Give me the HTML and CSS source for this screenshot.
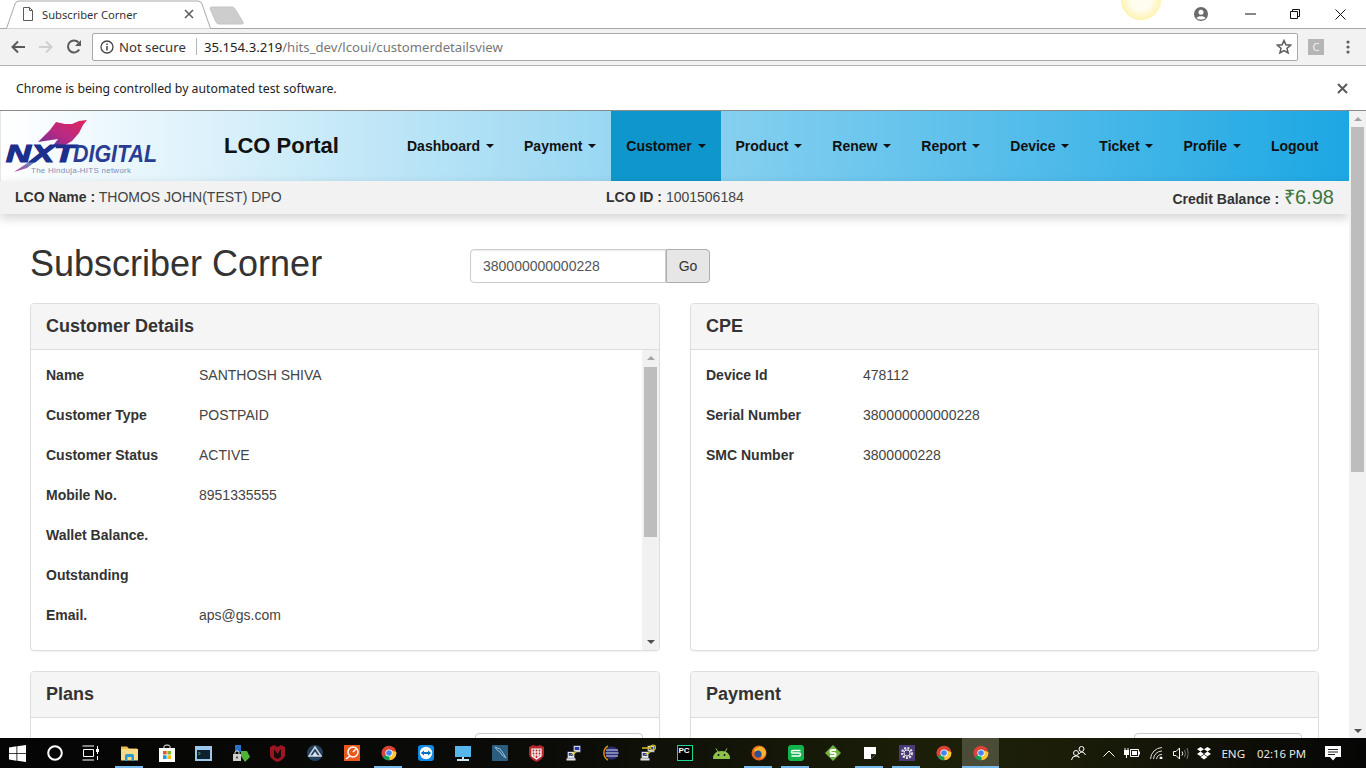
FILE: index.html
```html
<!DOCTYPE html>
<html lang="en">
<head>
<meta charset="utf-8">
<title>Subscriber Corner</title>
<link rel="stylesheet" href="styles.css">
</head>
<body>
<svg class="defs" width="0" height="0" aria-hidden="true">
  <symbol id="chrome" viewBox="0 0 24 24">
    <circle cx="12" cy="12" r="11" fill="#da4436"/>
    <path d="M12 12 2.500 17.500A11 11 0 0 1 3 5.600Z" fill="#da4436"/>
    <path d="M12 12 2.500 17.500A11 11 0 0 0 13 23Z" fill="#0f9d58"/>
    <path d="M12 12 13 23A11 11 0 0 0 22.900 10.500L12 7Z" fill="#fcc934"/>
    <circle cx="12" cy="12" r="5.400" fill="#fff"/>
    <circle cx="12" cy="12" r="4.200" fill="#4285f4"/>
  </symbol>
  <symbol id="putty" viewBox="0 0 24 24">
    <rect x="11" y="2" width="10" height="9" fill="#d5d9e4" stroke="#223" stroke-width="1"/>
    <rect x="13" y="4" width="6" height="4" fill="#2436a8"/>
    <rect x="3" y="10" width="10" height="9" fill="#e6e8ee" stroke="#223" stroke-width="1"/>
    <rect x="5" y="12" width="6" height="4" fill="#2436a8"/>
    <rect x="2" y="19" width="12" height="3" fill="#dfe1e6"/>
    <path d="M4 17 14 9l-2 3 6-3-9 7 2-3Z" fill="#f2e21c"/>
  </symbol>
</svg>

<div class="tabstrip">
  <svg class="tabshape" width="250" height="29" viewBox="0 0 250 29" aria-hidden="true">
    <path d="M6.500 28.500 15 4Q16 1 19 1H198Q201 1 202 4L210.500 28.500" fill="#fff" stroke="#a8a8a8"/>
    <path d="M210 8.500Q210 7 212 7H232Q234 7 235 9L243 22Q244 24 242 24H219Q217 24 216 22Z" fill="#cdcdcd" stroke="#c4c4c4"/>
  </svg>
  <div class="tab">
    <svg class="tab-doc" width="12" height="14" viewBox="0 0 12 14" aria-hidden="true"><path d="M1.500.5H7.500L10.500 3.500V13.500H1.500ZM7.500.5V3.500H10.500" fill="#fff" stroke="#5a5a5a"/></svg>
    <span class="tab-title">Subscriber Corner</span>
    <svg class="tab-close" width="10" height="10" viewBox="0 0 10 10" aria-hidden="true"><path d="M1 1 9 9M9 1 1 9" stroke="#5f5f5f" stroke-width="1.600"/></svg>
  </div>
  <div class="sun"></div>
  <div class="winctl">
    <svg class="profile" width="14" height="14" viewBox="0 0 14 14" aria-hidden="true"><circle cx="7" cy="7" r="7" fill="#6a6a6a"/><circle cx="7" cy="5.200" r="2.500" fill="#fff"/><path d="M2.500 11C3.500 8.500 10.500 8.500 11.500 11 9 13 5 13 2.500 11Z" fill="#fff"/></svg>
    <svg class="minimize" width="11" height="2" viewBox="0 0 11 2" aria-hidden="true"><path d="M0 1H11" stroke="#111"/></svg>
    <svg class="restore" width="10" height="10" viewBox="0 0 10 10" aria-hidden="true"><path d="M.5 2.500H7.500V9.500H.5ZM2.500 2.500V.5H9.500V7.500H7.500" fill="none" stroke="#111"/></svg>
    <svg class="winclose" width="11" height="11" viewBox="0 0 11 11" aria-hidden="true"><path d="M.5.5 10.500 10.500M10.500.5.5 10.500" stroke="#111"/></svg>
  </div>
</div>

<div class="toolbar">
  <svg class="nav-ico" width="16" height="14" viewBox="0 0 16 14" aria-hidden="true"><path d="M15 7H3M8 1.500 2.500 7 8 12.500" fill="none" stroke="#5a5a5a" stroke-width="2"/></svg>
  <svg class="nav-ico" width="16" height="14" viewBox="0 0 16 14" aria-hidden="true"><path d="M1 7H13M8 1.500 13.500 7 8 12.500" fill="none" stroke="#cfcfcf" stroke-width="2"/></svg>
  <svg class="nav-ico" width="16" height="16" viewBox="0 0 16 16" aria-hidden="true"><path d="M13.200 10.500A6 6 0 1 1 12.500 3.500" fill="none" stroke="#5a5a5a" stroke-width="2"/><path d="M15 1V7H9Z" fill="#5a5a5a"/></svg>
  <div class="omnibox">
    <svg class="info-ico" width="14" height="14" viewBox="0 0 14 14" aria-hidden="true"><circle cx="7" cy="7" r="6" fill="none" stroke="#444" stroke-width="1.300"/><path d="M7 6V10.500M7 3.500V5" stroke="#444" stroke-width="1.500"/></svg>
    <span class="secure">Not secure</span>
    <span class="omni-sep"></span>
    <span class="url"><span class="host">35.154.3.219</span>/hits_dev/lcoui/customerdetailsview</span>
    <svg class="star" width="16" height="15" viewBox="0 0 16 15" aria-hidden="true"><path d="M8 1.500 9.900 5.800 14.600 6.200 11 9.300 12.100 13.900 8 11.500 3.900 13.900 5 9.300 1.400 6.200 6.100 5.800Z" fill="none" stroke="#5a5a5a" stroke-width="1.500"/></svg>
  </div>
  <span class="ext">C</span>
  <svg class="menu-dots" width="4" height="14" viewBox="0 0 4 14" aria-hidden="true"><circle cx="2" cy="2" r="1.600" fill="#5f5f5f"/><circle cx="2" cy="7" r="1.600" fill="#5f5f5f"/><circle cx="2" cy="12" r="1.600" fill="#5f5f5f"/></svg>
</div>

<div class="infobar">
  <span class="infotext">Chrome is being controlled by automated test software.</span>
  <svg width="11" height="11" viewBox="0 0 11 11" aria-hidden="true"><path d="M1 1 10 10M10 1 1 10" stroke="#5a5a5a" stroke-width="2"/></svg>
</div>

<div class="viewport">
  <div class="page">
    <header class="navbar">
      <div class="logo">
        <svg width="180" height="70" viewBox="0 0 180 70" role="img" aria-label="NXT Digital logo">
          <defs>
            <linearGradient id="sw" x1="0" y1="1" x2="1" y2="0">
              <stop offset="0" stop-color="#6a2d92"/><stop offset=".45" stop-color="#b72a85"/><stop offset="1" stop-color="#e0255a"/>
            </linearGradient>
            <linearGradient id="sw2" x1="0" y1="1" x2="1" y2="0">
              <stop offset="0" stop-color="#c03a92"/><stop offset=".5" stop-color="#39b5dd"/><stop offset="1" stop-color="#2b3f9e"/>
            </linearGradient>
          </defs>
          <path d="M38 31 50 19 56 11 65 13 72 13 79 10 87 9 83 14 79 22 72 30 62 36 52 36 58 28Z" fill="url(#sw)"/>
          <path d="M14 61 60 30 54 37 27 57Z" fill="url(#sw2)"/>
          <text class="logo-nxt" x="6" y="51" textLength="69" lengthAdjust="spacingAndGlyphs">NXT</text>
          <text class="logo-dig" x="73" y="51" textLength="84" lengthAdjust="spacingAndGlyphs">DIGITAL</text>
          <text class="logo-tag" x="31" y="62">The Hinduja-HITS network</text>
        </svg>
      </div>
      <div class="brand">LCO Portal</div>
      <nav class="menu">
        <a class="menu-item">Dashboard <i class="caret"></i></a>
        <a class="menu-item">Payment <i class="caret"></i></a>
        <a class="menu-item is-active">Customer <i class="caret"></i></a>
        <a class="menu-item">Product <i class="caret"></i></a>
        <a class="menu-item">Renew <i class="caret"></i></a>
        <a class="menu-item">Report <i class="caret"></i></a>
        <a class="menu-item">Device <i class="caret"></i></a>
        <a class="menu-item">Ticket <i class="caret"></i></a>
        <a class="menu-item">Profile <i class="caret"></i></a>
        <a class="menu-item">Logout</a>
      </nav>
    </header>

    <div class="lcobar">
      <div class="lco-name"><b>LCO Name :</b> THOMOS JOHN(TEST) DPO</div>
      <div class="lco-id"><b>LCO ID :</b> 1001506184</div>
      <div class="lco-credit"><b class="credit-label">Credit Balance :</b> <span class="credit">₹6.98</span></div>
    </div>

    <main class="content">
      <div class="title-row">
        <h1 class="page-title">Subscriber Corner</h1>
        <div class="search-group">
          <div class="search-input">380000000000228</div>
          <div class="search-go">Go</div>
        </div>
      </div>

      <div class="grid">
        <section class="panel panel-tall">
          <h2 class="panel-head">Customer Details</h2>
          <div class="panel-body">
            <dl class="rows rows-left">
              <div class="row"><dt>Name</dt><dd>SANTHOSH SHIVA</dd></div>
              <div class="row"><dt>Customer Type</dt><dd>POSTPAID</dd></div>
              <div class="row"><dt>Customer Status</dt><dd>ACTIVE</dd></div>
              <div class="row"><dt>Mobile No.</dt><dd>8951335555</dd></div>
              <div class="row"><dt>Wallet Balance.</dt><dd></dd></div>
              <div class="row"><dt>Outstanding</dt><dd></dd></div>
              <div class="row"><dt>Email.</dt><dd>aps@gs.com</dd></div>
            </dl>
            <div class="scrollbar small">
              <i class="arrow up"></i>
              <div class="track"><div class="thumb thumb-panel"></div></div>
              <i class="arrow down"></i>
            </div>
          </div>
        </section>

        <section class="panel panel-tall">
          <h2 class="panel-head">CPE</h2>
          <div class="panel-body">
            <dl class="rows rows-right">
              <div class="row"><dt>Device Id</dt><dd>478112</dd></div>
              <div class="row"><dt>Serial Number</dt><dd>380000000000228</dd></div>
              <div class="row"><dt>SMC Number</dt><dd>3800000228</dd></div>
            </dl>
          </div>
        </section>

        <section class="panel">
          <h2 class="panel-head">Plans</h2>
          <div class="panel-tools"><div class="mini-search"></div></div>
        </section>

        <section class="panel">
          <h2 class="panel-head">Payment</h2>
          <div class="panel-tools"><div class="mini-search"></div></div>
        </section>
      </div>
    </main>
  </div>
  <div class="scrollbar page-bar">
    <i class="arrow up"></i>
    <div class="track"><div class="thumb thumb-page"></div></div>
    <i class="arrow down"></i>
  </div>
</div>

<footer class="taskbar">
  <div class="slots">
    <span class="slot"><svg class="nudge" width="17" height="17" viewBox="0 0 17 17" aria-hidden="true"><path d="M0 2.400 7.500 1.300V8H0ZM8.300 1.200 17 0V8H8.300ZM0 8.800H7.500V15.700L0 14.600ZM8.300 8.800H17V17L8.300 15.800Z" fill="#fff"/></svg></span>
    <span class="slot"><svg class="nudge" width="16" height="16" viewBox="0 0 16 16" aria-hidden="true"><circle cx="8" cy="8" r="6.800" fill="none" stroke="#fff" stroke-width="2"/></svg></span>
    <span class="slot"><svg class="nudge-more" width="17" height="16" viewBox="0 0 17 16" aria-hidden="true"><path d="M1.500 4.500H11.500V11.500H1.500ZM.5 1H12M.5 15H12M15.500 1V4M15.500 6.500V9M15.500 11V15" fill="none" stroke="#fff"/><rect x="14" y="4" width="3" height="3" fill="#fff"/></svg></span>
    <span class="slot is-open"><svg width="17" height="16" viewBox="0 0 17 16" aria-hidden="true"><path d="M0 1.500H6L8 3.500H16V6H0Z" fill="#e9bd4e"/><path d="M0 4H17V15.500H0Z" fill="#f7dc86"/><path d="M4 16V10.500Q4 9 5.500 9H11.500Q13 9 13 10.500V16H10.500V12H6.500V16Z" fill="#2a9ad6"/></svg></span>
    <span class="slot"><svg width="16" height="18" viewBox="0 0 16 18" aria-hidden="true"><path d="M5 4V2.500Q5 1 8 1T11 2.500V4" fill="none" stroke="#fff"/><path d="M0 4H16V18H0Z" fill="#fff"/><path d="M4 7H7.600V10.500H4Z" fill="#e8562b"/><path d="M8.400 7H12V10.500H8.400Z" fill="#7fba1c"/><path d="M4 11.300H7.600V15H4Z" fill="#1d9ae0"/><path d="M8.400 11.300H12V15H8.400Z" fill="#fbb90c"/></svg></span>
    <span class="slot"><svg width="17" height="15" viewBox="0 0 17 15" aria-hidden="true"><path d="M0 0H17V15H0Z" fill="#9cc7e8"/><rect x="2" y="4" width="13" height="9" fill="#0d2230"/><path d="M3.500 6 5 7.500 3.500 9" fill="none" stroke="#6fc060"/></svg></span>
    <span class="slot"><svg width="18" height="18" viewBox="0 0 18 18" aria-hidden="true"><path d="M3 1H9V8H3Z" fill="#2b6fc7"/><path d="M9 7 15 7 18 13 13 18 9 12Z" fill="#4fb135"/><rect x="1" y="10" width="8" height="7" fill="#cfcfcf"/><path d="M3 10V8Q5 5 7 8V10" fill="none" stroke="#cfcfcf"/><circle cx="5" cy="13.500" r="1" fill="#333"/></svg></span>
    <span class="slot"><svg width="15" height="17" viewBox="0 0 15 17" aria-hidden="true"><path d="M0 2 4 0 7.500 2 11 0 15 2V11Q13 15 7.500 17 2 15 0 11Z" fill="#9b1620"/><path d="M4 4 7.500 9 11 4V12L7.500 14 4 12Z" fill="#1a0b0b"/></svg></span>
    <span class="slot"><svg width="16" height="16" viewBox="0 0 16 16" aria-hidden="true"><circle cx="8" cy="8" r="8" fill="#25405c"/><path d="M8 2 14 11H2Z" fill="none" stroke="#cfd8e2" stroke-width="1.500"/><path d="M8 6.500 11 11H5Z" fill="#dfe6ee"/></svg></span>
    <span class="slot"><svg width="16" height="16" viewBox="0 0 16 16" aria-hidden="true"><rect width="16" height="16" fill="#e9591f"/><circle cx="9" cy="7" r="5" fill="none" stroke="#fff" stroke-width="1.500"/><path d="M9 7 12 4M2 14 6 11" stroke="#fff" stroke-width="1.500"/></svg></span>
    <span class="slot is-open"><svg width="16" height="16" aria-hidden="true"><use href="#chrome"/></svg></span>
    <span class="slot"><svg width="16" height="16" viewBox="0 0 16 16" aria-hidden="true"><rect width="16" height="16" rx="3" fill="#0d8ae6"/><circle cx="8" cy="8" r="6.200" fill="#fff"/><path d="M2.800 8 6 5.500V7H10V5.500L13.200 8 10 10.500V9H6V10.500Z" fill="#0d6fc4"/></svg></span>
    <span class="slot"><svg width="16" height="15" viewBox="0 0 16 15" aria-hidden="true"><rect x="0" y="0" width="16" height="11" fill="#55b7ec"/><rect x="7" y="11" width="2" height="2" fill="#cfe4f0"/><rect x="2" y="13" width="12" height="2" fill="#cfe4f0"/></svg></span>
    <span class="slot"><svg width="16" height="16" viewBox="0 0 16 16" aria-hidden="true"><rect width="16" height="16" rx="1" fill="#2a5d80"/><path d="M3 2Q9 3 11 8L14 13Q9 10 8 7 5 6 3 2Z" fill="none" stroke="#9cc1d6"/></svg></span>
    <span class="slot"><svg width="15" height="17" viewBox="0 0 15 17" aria-hidden="true"><path d="M0 2 4 0 7.500 1 11 0 15 2V10Q13 15 7.500 17 2 15 0 10Z" fill="#b5282f"/><path d="M3 4H12V11L7.500 14 3 11ZM3 7H12M3 10H12M6 4V13M9 4V13" fill="none" stroke="#fff" stroke-width="1.200"/></svg></span>
    <span class="slot"><svg width="18" height="18" aria-hidden="true"><use href="#putty"/></svg></span>
    <span class="slot"><svg width="16" height="16" viewBox="0 0 16 16" aria-hidden="true"><circle cx="9" cy="8" r="6.500" fill="#2b2f7a"/><path d="M3 5H15M2.500 8H15.500M3 11H15" stroke="#d8d8e8"/><path d="M5 1A8 8 0 0 0 5 15" fill="none" stroke="#e08a1e" stroke-width="1.500"/></svg></span>
    <span class="slot"><svg width="18" height="18" viewBox="0 0 18 18" aria-hidden="true"><use href="#putty"/><circle cx="14" cy="3.500" r="2.500" fill="none" stroke="#d9c21c" stroke-width="1.200"/><path d="M3 4H12" stroke="#d9c21c" stroke-width="1.500"/></svg></span>
    <span class="slot"><span class="pc-ico">PC</span></span>
    <span class="slot"><svg width="17" height="11" viewBox="0 0 17 11" aria-hidden="true"><path d="M0 11Q0 3 8.500 3T17 11Z" fill="#8fbf4d"/><path d="M3 .5 5 4M14 .5 12 4" stroke="#8fbf4d"/><circle cx="5.500" cy="7" r="1" fill="#111"/><circle cx="11.500" cy="7" r="1" fill="#111"/></svg></span>
    <span class="slot is-open"><svg width="16" height="16" viewBox="0 0 16 16" aria-hidden="true"><circle cx="8" cy="8" r="7.500" fill="#e8651c"/><path d="M3 5Q6 1 11 2 15 4 15 8 14 13 9 14 12 11 10 8 8 6 5 8 3 7 3 5Z" fill="#f7b52c"/><circle cx="7" cy="9" r="3.500" fill="#28509b"/></svg></span>
    <span class="slot is-open"><svg width="16" height="16" viewBox="0 0 16 16" aria-hidden="true"><rect width="16" height="16" rx="3" fill="#12b54a"/><path d="M12.500 5.500H5Q3.500 5.500 3.500 7T5 8H11Q12.500 8 12.500 9.500T11 11H3.500" fill="none" stroke="#fff" stroke-width="1.500"/></svg></span>
    <span class="slot"><svg width="16" height="16" viewBox="0 0 16 16" aria-hidden="true"><path d="M8 0 16 8 8 16 0 8Z" fill="#71b340"/><path d="M11 5H7Q5.500 5 5.500 6.500T7 8H9Q10.500 8 10.500 9.500T9 11H5" fill="none" stroke="#fff" stroke-width="2"/></svg></span>
    <span class="slot is-open"><svg width="12" height="12" viewBox="0 0 12 12" aria-hidden="true"><path d="M0 0H12V7L7 12H0Z" fill="#fff"/><path d="M7 12V7H12Z" fill="#222"/></svg></span>
    <span class="slot is-open"><svg width="16" height="16" viewBox="0 0 16 16" aria-hidden="true"><rect width="16" height="16" fill="#4b3a78"/><circle cx="8" cy="8" r="4.800" fill="none" stroke="#e4e4e4" stroke-width="2.400" stroke-dasharray="2 1.200"/><circle cx="8" cy="8" r="3" fill="#4b3a78" stroke="#e4e4e4"/></svg></span>
    <span class="slot"><svg width="16" height="16" aria-hidden="true"><use href="#chrome"/></svg></span>
    <span class="slot is-current"><svg width="16" height="16" aria-hidden="true"><use href="#chrome"/></svg></span>
  </div>
  <div class="tray">
    <svg class="t-people" width="15" height="14" viewBox="0 0 15 14" aria-hidden="true"><circle cx="5" cy="7" r="2.500" fill="none" stroke="#fff"/><path d="M.5 14Q1 10 5 10T8 12" fill="none" stroke="#fff"/><circle cx="10.500" cy="3" r="2.500" fill="none" stroke="#fff"/><path d="M8 8Q9 6 11 6T14.500 9" fill="none" stroke="#fff"/></svg>
    <svg class="t-chev" width="12" height="7" viewBox="0 0 12 7" aria-hidden="true"><path d="M.5 6.500 6 1 11.500 6.500" fill="none" stroke="#fff"/></svg>
    <svg class="t-power" width="17" height="10" viewBox="0 0 17 10" aria-hidden="true"><path d="M7.500 1.500H15.500V8.500H7.500Z" fill="none" stroke="#fff"/><rect x="9" y="3" width="5" height="4" fill="#fff"/><rect x="16" y="3.500" width="1" height="3" fill="#fff"/><rect x="1" y="2" width="5" height="5" fill="#fff"/><path d="M2 0V2M5 0V2M3.500 7V10" stroke="#fff"/></svg>
    <svg class="t-wifi" width="14" height="12" viewBox="0 0 14 12" aria-hidden="true"><path d="M.5 12A12 12 0 0 1 12 .5M3.500 12A8.500 8.500 0 0 1 12 4M6.500 12A5 5 0 0 1 12 7.500" fill="none" stroke="#ddd"/><circle cx="11" cy="11" r="1.500" fill="#fff"/></svg>
    <svg class="t-vol" width="16" height="13" viewBox="0 0 16 13" aria-hidden="true"><path d="M.5 4.500H3L6.500 1V12L3 8.500H.5Z" fill="none" stroke="#fff"/><path d="M9 4.500Q10.500 6.500 9 8.500" fill="none" stroke="#fff"/><path d="M11.500 3Q13.500 6.500 11.500 10M14 1Q16.500 6.500 14 12" fill="none" stroke="#777"/></svg>
    <svg class="t-drop" width="14" height="13" viewBox="0 0 14 13" aria-hidden="true"><path d="M3.500 0 7 2.300 3.500 4.600 0 2.300ZM10.500 0 14 2.300 10.500 4.600 7 2.300ZM3.500 4.600 7 6.900 3.500 9.200 0 6.900ZM10.500 4.600 14 6.900 10.500 9.200 7 6.900ZM3.500 10 7 7.800 10.500 10 7 12.500Z" fill="#fff"/></svg>
    <span class="t-lang">ENG</span>
    <span class="t-time">02:16 PM</span>
    <svg class="t-action" width="16" height="15" viewBox="0 0 16 15" aria-hidden="true"><path d="M0 0H16V11H11L8 14.500 5 11H0Z" fill="#fff"/><path d="M3 3.500H13M3 6H13M3 8.500H10" stroke="#222"/></svg>
  </div>
</footer>
</body>
</html>
```

FILE: styles.css
```css
* { box-sizing: border-box; }
html, body { margin: 0; padding: 0; height: 768px; overflow: hidden; }
body {
  width: 1366px;
  display: flex;
  flex-direction: column;
  background: #fff;
  font-family: "Liberation Sans", Arial, sans-serif;
  font-size: 14px;
  color: #333;
}
.defs { position: absolute; }

/* Browser chrome */
.tabstrip {
  position: relative;
  height: 29px;
  flex: none;
  background: #fff;
  border-bottom: 1px solid #a8a8a8;
  display: flex;
  justify-content: space-between;
  font-family: "Noto Sans", "Open Sans", sans-serif;
}
.tabshape { position: absolute; left: 0; top: 0; }
.tab {
  position: relative;
  width: 200px;
  height: 28px;
  display: flex;
  align-items: center;
  padding-left: 22px;
}
.tab-title { margin-left: 8px; font-size: 11.200px; color: #333; width: 142px; white-space: nowrap; }
.sun {
  position: absolute;
  left: 1121px;
  top: -20px;
  width: 40px;
  height: 40px;
  border-radius: 50%;
  background: radial-gradient(circle, #fffdf0 0 35%, #fff4b5 68%, #fde47c 92%, #fbe07a 100%);
}
.winctl { display: flex; align-items: center; position: relative; height: 28px; }
.profile { margin-right: 37px; }
.minimize { margin-right: 34px; }
.restore { margin-right: 35px; }
.winclose { margin-right: 20px; }

.toolbar {
  height: 37px;
  flex: none;
  background: #f2f2f2;
  border-bottom: 1px solid #b5b5b5;
  display: flex;
  align-items: center;
  padding: 0 0 1px 10px;
}
.nav-ico { margin-right: 12px; }
.omnibox {
  margin-left: -2px;
  width: 1206px;
  height: 28px;
  background: #fff;
  border: 1px solid #a9a9a9;
  border-radius: 2px;
  display: flex;
  align-items: center;
  padding-left: 7px;
  font-family: "Noto Sans", "Open Sans", sans-serif;
  font-size: 13.150px;
  white-space: nowrap;
}
.info-ico { margin-right: 5px; }
.secure { color: #333; width: 69px; }
.omni-sep { width: 1px; height: 17px; background: #b5b5b5; margin: 0 7px 0 8px; }
.url { color: #777; flex: 1; }
.host { color: #222; }
.star { margin-right: 5px; }
.ext {
  margin-left: 10px;
  width: 16px;
  height: 16px;
  background: #b5b5b5;
  color: #f0f0f0;
  font-family: "Noto Sans", sans-serif;
  font-size: 11px;
  line-height: 16px;
  text-align: center;
}
.menu-dots { margin-left: 22px; }

.infobar {
  height: 45px;
  flex: none;
  background: #fff;
  border-bottom: 1px solid #8a8a8a;
  display: flex;
  align-items: center;
  justify-content: space-between;
  padding: 0 18px 0 16px;
  font-family: "Noto Sans", "Open Sans", sans-serif;
  font-size: 12.270px;
  color: #222;
}

/* Page viewport */
.viewport { flex: 1; min-height: 0; display: flex; overflow: hidden; }
.page { width: 1349px; flex: none; overflow: hidden; }

.scrollbar { background: #f1f1f1; display: flex; flex-direction: column; align-items: center; flex: none; }
.page-bar { width: 17px; height: 628px; }
.small { width: 17px; }
.track { flex: 1; width: 100%; min-height: 0; padding: 0 2px; }
.thumb { background: #bdbdbd; width: 100%; }
.thumb-page { height: 345px; }
.thumb-panel { height: 170px; }
.arrow { flex: none; width: 0; height: 0; border-left: 4px solid transparent; border-right: 4px solid transparent; }
.arrow.up { border-bottom: 4px solid #a3a3a3; margin: 6px 0; }
.arrow.down { border-top: 4px solid #505050; margin: 6px 0; }
.small .arrow.up { margin: 6px 0 7px; }

/* Navbar */
.navbar {
  height: 70px;
  display: flex;
  align-items: stretch;
  background: linear-gradient(90deg, #fff 0, #1ca7e3 100%);
  border-left: 1px solid #e6e6e6;
}
.logo { width: 223px; flex: none; }
.logo svg { display: block; margin-left: -1px; }
.logo-nxt { font: italic 700 24px "Liberation Sans", sans-serif; fill: #1d2f8c; stroke: #1d2f8c; stroke-width: 1.200px; }
.logo-dig { font: italic 700 23px "Liberation Sans", sans-serif; fill: #2a3d92; }
.logo-tag { font: 8px "Liberation Sans", sans-serif; fill: #7f8db8; letter-spacing: .25px; }
.brand { width: 168px; flex: none; font-size: 22px; font-weight: 700; color: #111; line-height: 70px; }
.menu { display: flex; align-items: stretch; }
.menu-item {
  display: flex;
  align-items: center;
  padding: 0 15px;
  color: #111;
  font-size: 14px;
  font-weight: 700;
  white-space: pre;
}
.menu-item.is-active { background: #0f97cd; }
.caret { width: 0; height: 0; margin-left: 2px; border-top: 4px solid #111; border-left: 4px solid transparent; border-right: 4px solid transparent; }

.lcobar {
  position: relative;
  height: 33px;
  background: #f2f2f2;
  box-shadow: 0 4px 10px rgba(0, 0, 0, .18);
  display: grid;
  grid-template-columns: 591px 1fr auto;
  align-items: center;
  padding: 0 15px 2px;
  color: #444;
}
.lcobar b { color: #333; }
.lco-credit { display: flex; align-items: center; gap: 5px; white-space: nowrap; }
.credit-label { margin-top: 4px; }
.credit { font-size: 20px; color: #3c763d; }

/* Content */
.content { padding: 0 30px; }
.title-row { display: flex; align-items: flex-start; height: 89px; }
.page-title { margin: 30px 0 0; width: 440px; font-size: 36px; font-weight: 400; line-height: 40px; color: #333; }
.search-group { display: flex; height: 34px; margin-top: 35px; }
.search-input {
  width: 196px;
  background: #fff;
  border: 1px solid #ccc;
  border-radius: 4px 0 0 4px;
  padding: 0 12px;
  line-height: 32px;
  color: #555;
  box-shadow: inset 0 1px 1px rgba(0, 0, 0, .075);
}
.search-go {
  width: 44px;
  background: #e6e6e6;
  border: 1px solid #adadad;
  border-radius: 0 4px 4px 0;
  text-align: center;
  line-height: 32px;
  color: #333;
}
.grid { display: grid; grid-template-columns: 630px 629px; gap: 20px 30px; }
.panel { border: 1px solid #ddd; border-radius: 4px; background: #fff; box-shadow: 0 1px 1px rgba(0, 0, 0, .05); }
.panel-tall { height: 348px; display: flex; flex-direction: column; }
.panel-head {
  margin: 0;
  height: 46px;
  flex: none;
  background: #f5f5f5;
  border-bottom: 1px solid #ddd;
  border-radius: 3px 3px 0 0;
  padding: 0 15px;
  font-size: 18px;
  font-weight: 700;
  line-height: 45px;
  color: #333;
}
.panel-body { flex: 1; min-height: 0; display: flex; }
.rows { flex: 1; margin: 0; padding: 5px 15px 0; }
.row { display: flex; height: 40px; align-items: center; }
.row dt { font-weight: 700; color: #333; flex: none; }
.row dd { margin: 0; color: #444; }
.rows-left dt { width: 153px; }
.rows-right dt { width: 157px; }
.panel-tools { display: flex; justify-content: flex-end; padding: 15px 16px 0 0; height: 60px; }
.mini-search { width: 168px; height: 34px; border: 1px solid #ccc; border-radius: 4px; }

/* Taskbar */
.taskbar {
  height: 30px;
  flex: none;
  display: flex;
  justify-content: space-between;
  background: linear-gradient(90deg, #050505 0, #0b0b08 40%, #1d2008 70%, #1b1d09 78%, #0d0d07 92%, #060606 100%);
  font-family: "Noto Sans", "Open Sans", sans-serif;
  color: #fff;
}
.slots { display: flex; }
.slot {
  position: relative;
  width: 37px;
  height: 30px;
  display: flex;
  align-items: center;
  justify-content: center;
}
.nudge { margin-right: 2px; }
.nudge-more { margin-right: 4px; }
.is-open::after, .is-current::after {
  content: "";
  position: absolute;
  left: 4px;
  right: 5px;
  bottom: 0;
  height: 2px;
  background: #76b9ed;
}
.is-current { background: #4a4c38; }
.is-current::after { left: 0; right: 0; }
.pc-ico {
  width: 16px;
  height: 16px;
  background: #000;
  border: 1px solid #21d789;
  font: 700 8px/10px "Liberation Sans", sans-serif;
  color: #fff;
  padding-left: 1px;
}
.tray { display: flex; align-items: center; font-size: 12px; color: #e8e8e8; white-space: nowrap; }
.t-people { margin-right: 17.500px; }
.t-chev { margin-right: 7.500px; }
.t-power { margin-right: 10.500px; }
.t-wifi { margin-right: 9px; }
.t-vol { margin-right: 8px; }
.t-drop { margin-right: 10px; }
.t-lang { margin-right: 12px; font-size: 11.600px; }
.t-time { margin-right: 19px; font-size: 11.300px; }
.t-action { margin-right: 25px; }
```
